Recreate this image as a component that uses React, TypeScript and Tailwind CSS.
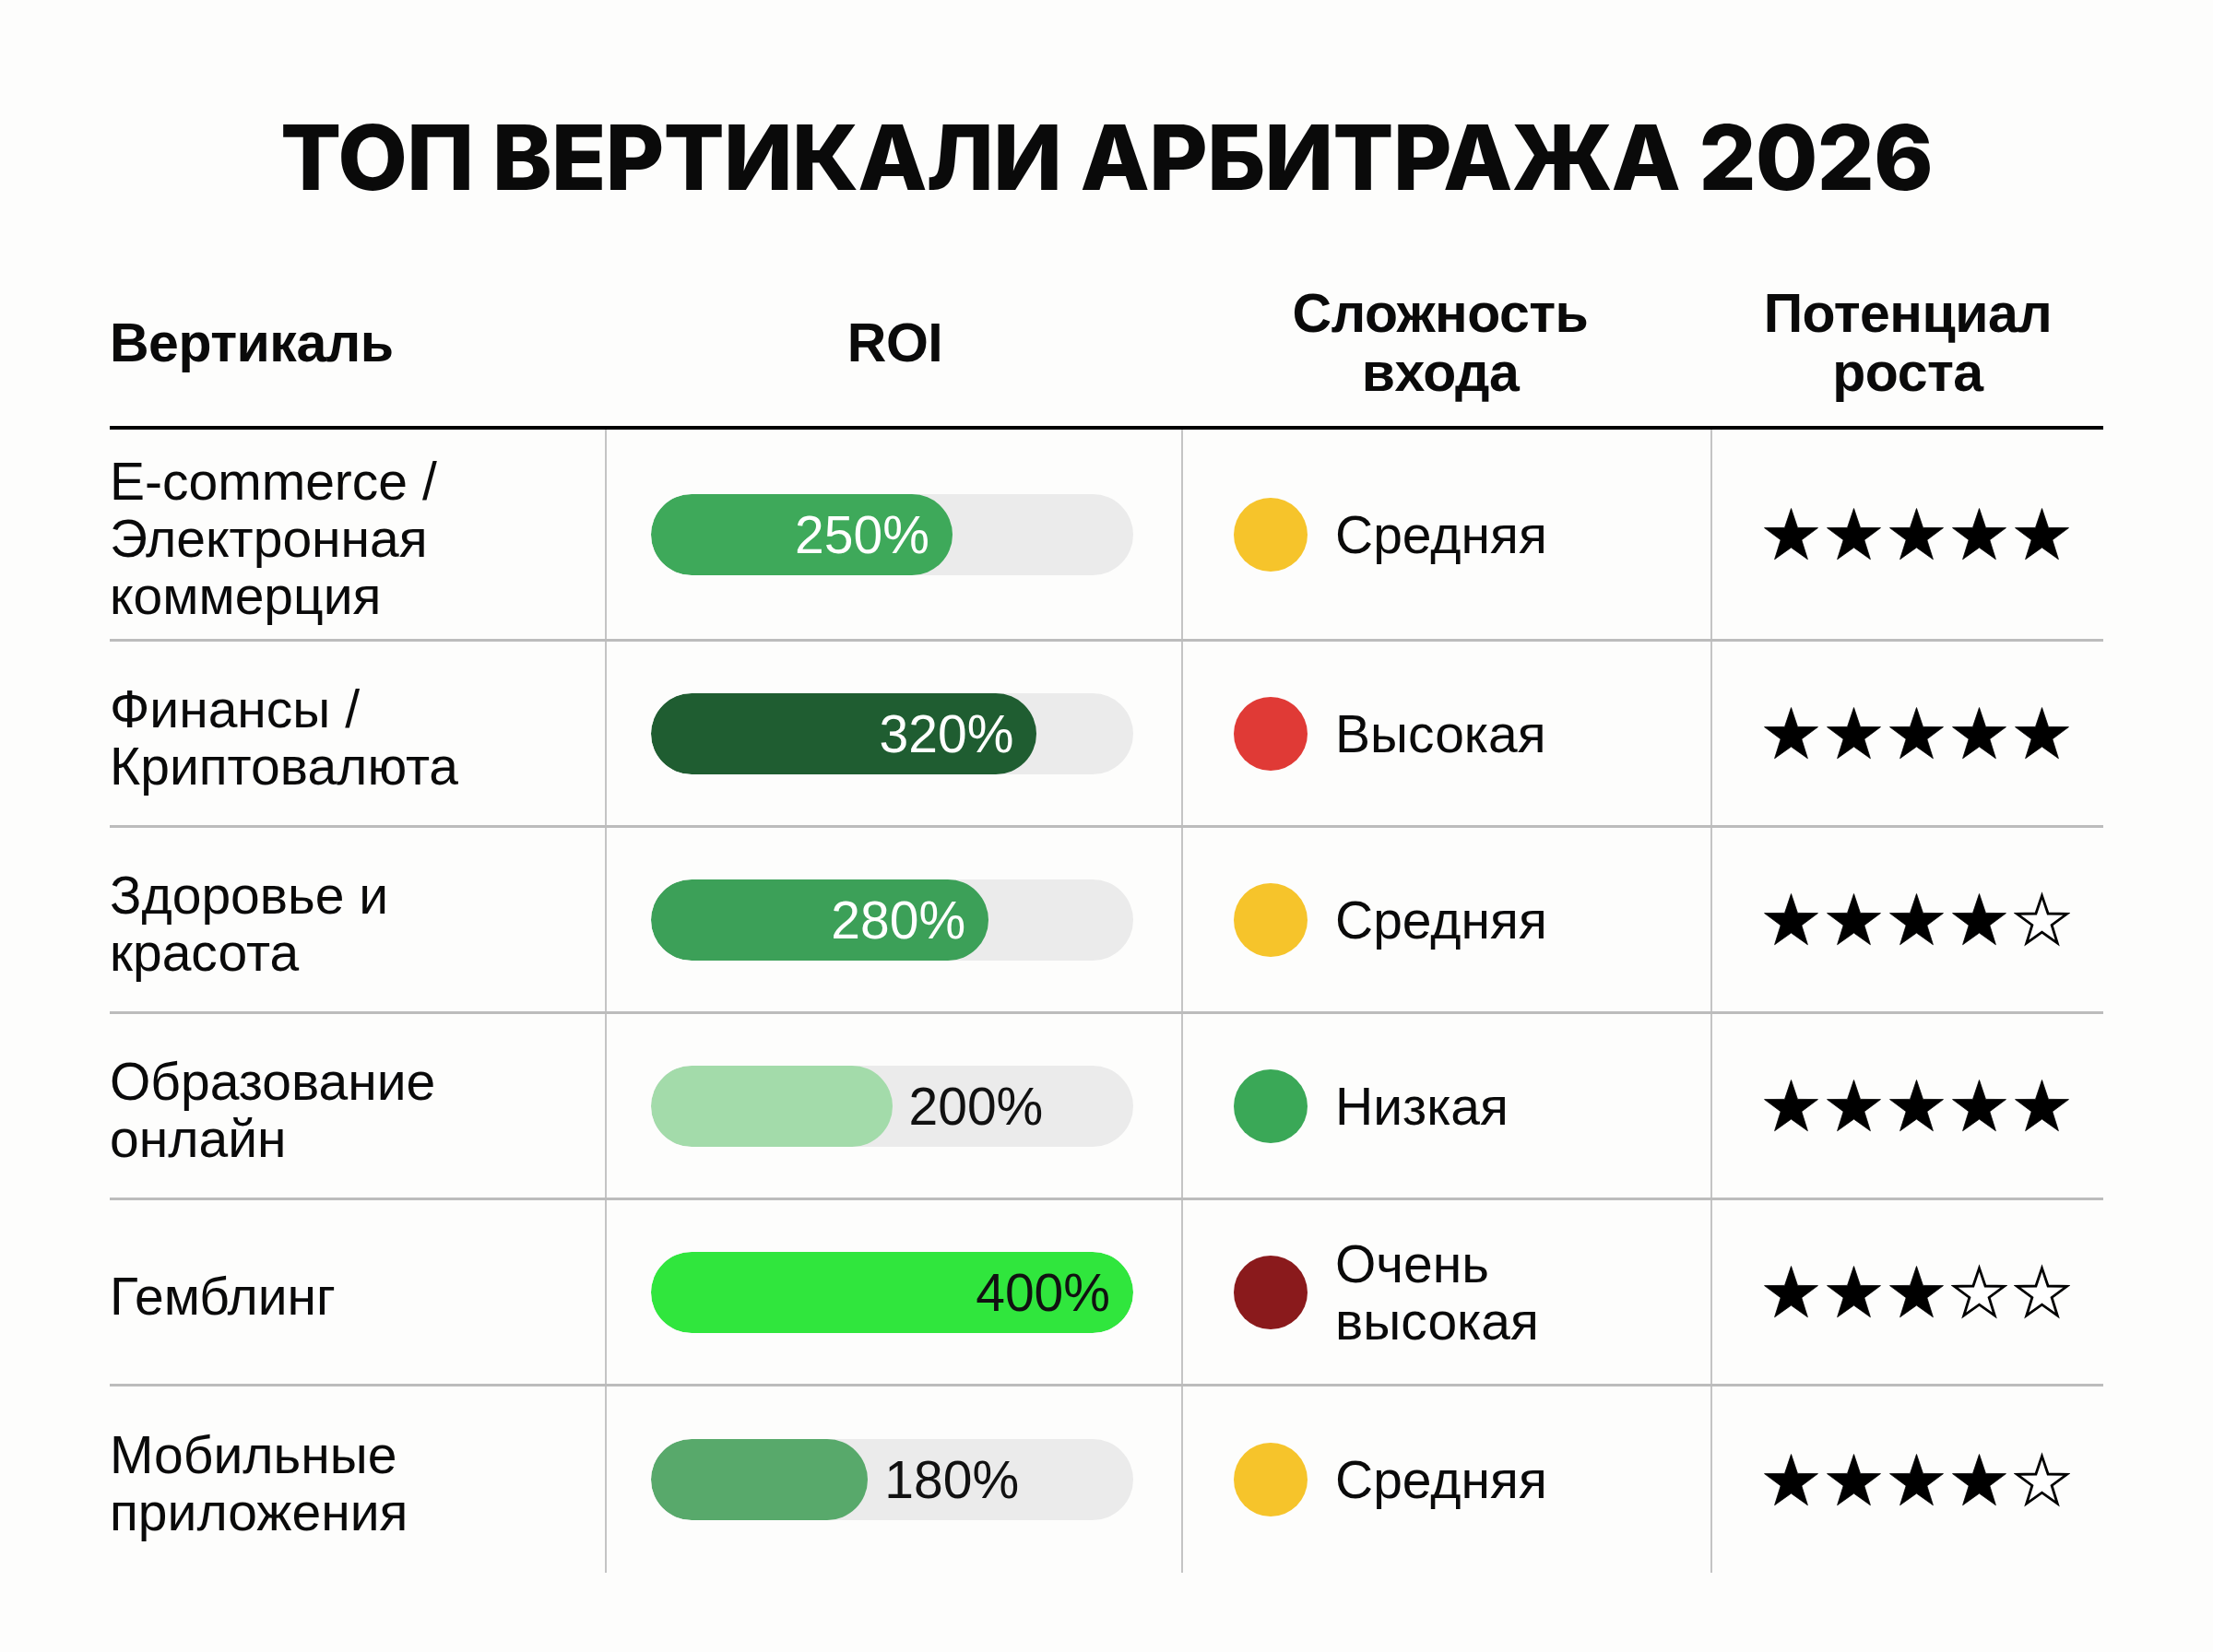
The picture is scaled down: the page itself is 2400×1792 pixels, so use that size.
import React from "react";

type Row = {
  name: string[];
  roi: number;
  fill: string;
  inside: boolean;
  valueColor: string;
  level: string[];
  dot: string;
  stars: number;
};

const rows: Row[] = [
  {
    name: ["E-commerce /", "Электронная", "коммерция"],
    roi: 250,
    fill: "bg-[#3ea95a]",
    inside: true,
    valueColor: "text-white",
    level: ["Средняя"],
    dot: "bg-[#f6c42b]",
    stars: 5,
  },
  {
    name: ["Финансы /", "Криптовалюта"],
    roi: 320,
    fill: "bg-[#1f5d31]",
    inside: true,
    valueColor: "text-white",
    level: ["Высокая"],
    dot: "bg-[#e03a36]",
    stars: 5,
  },
  {
    name: ["Здоровье и", "красота"],
    roi: 280,
    fill: "bg-[#3ca058]",
    inside: true,
    valueColor: "text-white",
    level: ["Средняя"],
    dot: "bg-[#f6c42b]",
    stars: 4,
  },
  {
    name: ["Образование", "онлайн"],
    roi: 200,
    fill: "bg-[#a3dbaa]",
    inside: false,
    valueColor: "text-[#111]",
    level: ["Низкая"],
    dot: "bg-[#3aa857]",
    stars: 5,
  },
  {
    name: ["Гемблинг"],
    roi: 400,
    fill: "bg-[#30e63d]",
    inside: true,
    valueColor: "text-[#111]",
    level: ["Очень", "высокая"],
    dot: "bg-[#8a1a1c]",
    stars: 3,
  },
  {
    name: ["Мобильные", "приложения"],
    roi: 180,
    fill: "bg-[#58a96b]",
    inside: false,
    valueColor: "text-[#111]",
    level: ["Средняя"],
    dot: "bg-[#f6c42b]",
    stars: 4,
  },
];

function points(R: number, r: number) {
  const cx = 12;
  const cy = 13;
  const pts: string[] = [];
  for (let i = 0; i < 10; i++) {
    const a = ((-90 + i * 36) * Math.PI) / 180;
    const rad = i % 2 === 0 ? R : r;
    pts.push(`${(cx + rad * Math.cos(a)).toFixed(2)},${(cy + rad * Math.sin(a)).toFixed(2)}`);
  }
  return pts.join(" ");
}

function Star({ filled }: { filled: boolean }) {
  return (
    <svg viewBox="0 0 24 24" className="h-[61px] w-[61px]">
      {filled ? (
        <polygon points={points(12, 4.7)} fill="#000" stroke="#000" strokeWidth="0.3" strokeLinejoin="round" />
      ) : (
        <polygon points={points(11.2, 4.4)} fill="#fff" stroke="#000" strokeWidth="1.1" />
      )}
    </svg>
  );
}

function Bar({ row }: { row: Row }) {
  const label = `${row.roi}%`;
  return (
    <div className="flex h-[88px] w-[523px] overflow-hidden rounded-full bg-[#ebebeb]">
      <div
        className={`flex h-full items-center justify-end rounded-full pr-[25px] ${row.fill}`}
        style={{ width: `${(row.roi / 400) * 100}%` }}
      >
        {row.inside && <span className={row.valueColor}>{label}</span>}
      </div>
      {!row.inside && (
        <span className={`flex items-center pl-[18px] ${row.valueColor}`}>{label}</span>
      )}
    </div>
  );
}

export default function App() {
  return (
    <div className="flex min-h-screen w-full flex-col items-center bg-[#fdfdfc] font-['Liberation_Sans',Arial,sans-serif] text-[#0a0a0a]">
      <h1 className="pt-[122px] font-['Inter',sans-serif] text-[98px] leading-none font-extrabold tracking-[-1px]">
        ТОП ВЕРТИКАЛИ АРБИТРАЖА 2026
      </h1>

      <div className="mt-[64px] w-[2162px]">
        <div className="grid h-[182px] grid-cols-[539px_625px_574px_424px] items-center border-b-4 border-black pb-[2px] text-[59px] leading-[64px] font-bold tracking-[-0.5px]">
          <div>Вертикаль</div>
          <div className="text-center">ROI</div>
          <div className="pr-[16px] text-center">
            Сложность
            <br />
            входа
          </div>
          <div className="text-center">
            Потенциал
            <br />
            роста
          </div>
        </div>

        {rows.map((row, i) => (
          <div
            key={i}
            className={`grid grid-cols-[539px_625px_574px_424px] text-[57px] leading-[62px] ${
              i === 0 ? "h-[230px]" : "h-[202px]"
            } ${i < rows.length - 1 ? "border-b-[3px] border-[#bcbcbc]" : ""}`}
          >
            <div className="flex items-center border-r-2 border-[#c4c4c4] pt-[8px]">
              <div>
                {row.name.map((l) => (
                  <div key={l}>{l}</div>
                ))}
              </div>
            </div>
            <div className="flex items-center justify-center border-r-2 border-[#c4c4c4] pr-[4px]">
              <Bar row={row} />
            </div>
            <div className="flex items-center gap-[30px] border-r-2 border-[#c4c4c4] pl-[55px]">
              <div className={`h-[80px] w-[80px] shrink-0 rounded-full ${row.dot}`} />
              <div>
                {row.level.map((l) => (
                  <div key={l}>{l}</div>
                ))}
              </div>
            </div>
            <div className="flex items-center justify-center gap-[7px] pl-[18px]">
              {[0, 1, 2, 3, 4].map((s) => (
                <Star key={s} filled={s < row.stars} />
              ))}
            </div>
          </div>
        ))}
      </div>
    </div>
  );
}
